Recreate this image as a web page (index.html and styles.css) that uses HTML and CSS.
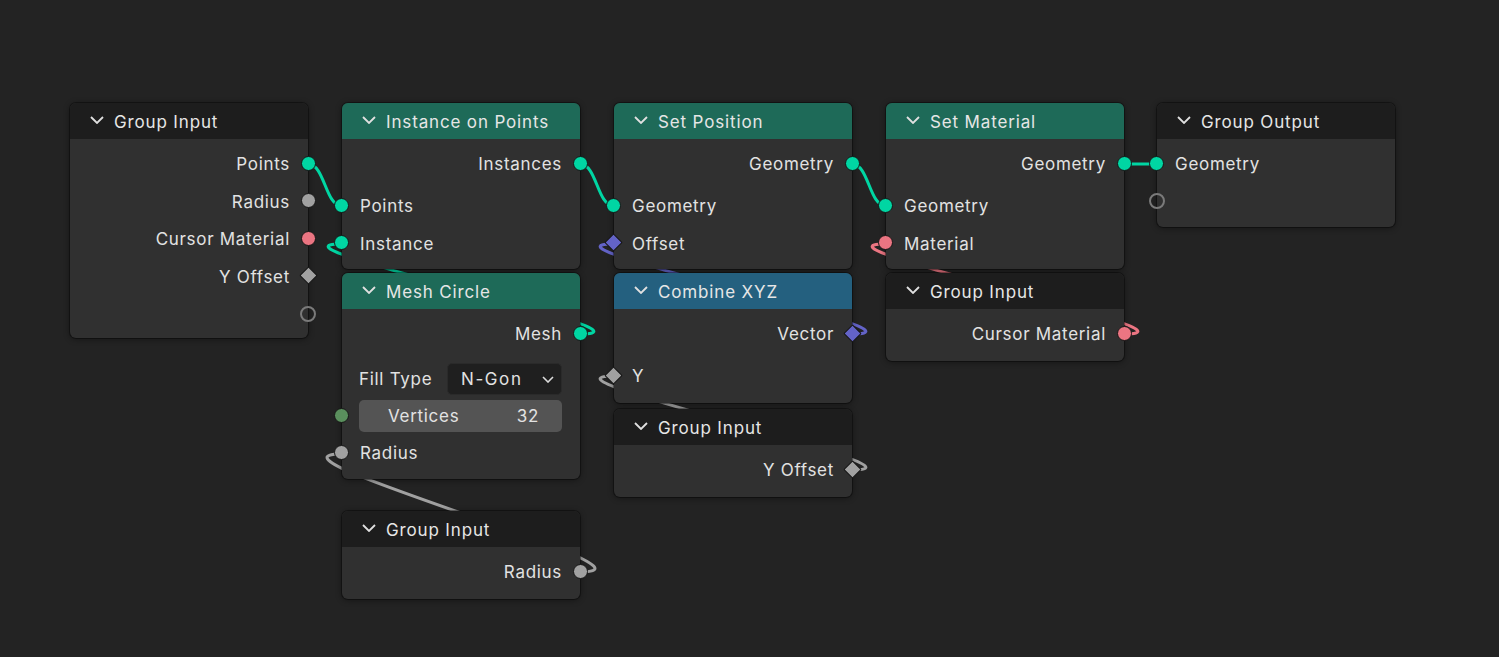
FILE: index.html
```html
<!DOCTYPE html>
<html>
<head>
<meta charset="utf-8">
<link rel="stylesheet" href="styles.css">
</head>
<body>
<div class="editor">
  <svg class="links" width="1499" height="657" viewBox="0 0 1499 657">
    <path class="lk geo" d="M308 164 C325 164 325 206 342 206"/>
    <path class="lk geo" d="M580 334 C675 334 247 244 342 244"/>
    <path class="lk geo" d="M580 164 C597 164 597 206 614 206"/>
    <path class="lk vec" d="M852 334 C947 334 519 244 614 244"/>
    <path class="lk flt" d="M852 470 C947 470 519 376 614 376"/>
    <path class="lk geo" d="M852 164 C869 164 869 206 886 206"/>
    <path class="lk mat" d="M1124 334 C1219 334 791 244 886 244"/>
    <path class="lk geo" d="M1124 164 L1157 164"/>
    <path class="lk flt" d="M580 572 C680 572 242 454 342 454"/>
  </svg>

  <div class="node pos-gi-main">
    <div class="hdr hdr-dark"><svg class="chev" viewBox="0 0 14 8"><polyline points="1,1 7,7 13,1"/></svg><span>Group Input</span></div>
    <div class="body body-tight">
      <div class="row out"><span>Points</span><i class="sock geo"></i></div>
      <div class="row out"><span>Radius</span><i class="sock flt"></i></div>
      <div class="row out"><span>Cursor Material</span><i class="sock mat"></i></div>
      <div class="row out"><span>Y Offset</span><i class="sock dia flt"></i></div>
      <div class="row out"><i class="sock empty"></i></div>
    </div>
  </div>

  <div class="node pos-iop">
    <div class="hdr hdr-green"><svg class="chev" viewBox="0 0 14 8"><polyline points="1,1 7,7 13,1"/></svg><span>Instance on Points</span></div>
    <div class="body">
      <div class="row out"><span>Instances</span><i class="sock geo"></i></div>
      <div class="inputs">
        <div class="row in"><i class="sock geo"></i><span>Points</span></div>
        <div class="row in"><i class="sock geo"></i><span>Instance</span></div>
      </div>
    </div>
  </div>

  <div class="node pos-setpos">
    <div class="hdr hdr-green"><svg class="chev" viewBox="0 0 14 8"><polyline points="1,1 7,7 13,1"/></svg><span>Set Position</span></div>
    <div class="body">
      <div class="row out"><span>Geometry</span><i class="sock geo"></i></div>
      <div class="inputs">
        <div class="row in"><i class="sock geo"></i><span>Geometry</span></div>
        <div class="row in"><i class="sock dia vec"></i><span>Offset</span></div>
      </div>
    </div>
  </div>

  <div class="node pos-setmat">
    <div class="hdr hdr-green"><svg class="chev" viewBox="0 0 14 8"><polyline points="1,1 7,7 13,1"/></svg><span>Set Material</span></div>
    <div class="body">
      <div class="row out"><span>Geometry</span><i class="sock geo"></i></div>
      <div class="inputs">
        <div class="row in"><i class="sock geo"></i><span>Geometry</span></div>
        <div class="row in"><i class="sock mat"></i><span>Material</span></div>
      </div>
    </div>
  </div>

  <div class="node pos-gout">
    <div class="hdr hdr-dark"><svg class="chev" viewBox="0 0 14 8"><polyline points="1,1 7,7 13,1"/></svg><span>Group Output</span></div>
    <div class="body">
      <div class="row in"><i class="sock geo"></i><span>Geometry</span></div>
      <div class="row in"><i class="sock empty"></i></div>
    </div>
  </div>

  <div class="node pos-mesh">
    <div class="hdr hdr-green"><svg class="chev" viewBox="0 0 14 8"><polyline points="1,1 7,7 13,1"/></svg><span>Mesh Circle</span></div>
    <div class="body">
      <div class="row out"><span>Mesh</span><i class="sock geo"></i></div>
      <div class="prop-row">
        <span class="prop-label">Fill Type</span>
        <div class="dropdown"><span class="dd-text">N-Gon</span><svg class="dd-chev" viewBox="0 0 12 7"><polyline points="1,1 6,6 11,1"/></svg></div>
      </div>
      <div class="field-row">
        <i class="sock int"></i>
        <div class="numfield"><span>Vertices</span><span>32</span></div>
      </div>
      <div class="row in row-after-field"><i class="sock flt"></i><span>Radius</span></div>
    </div>
  </div>

  <div class="node pos-comb">
    <div class="hdr hdr-blue"><svg class="chev" viewBox="0 0 14 8"><polyline points="1,1 7,7 13,1"/></svg><span>Combine XYZ</span></div>
    <div class="body body-loose">
      <div class="row out"><span>Vector</span><i class="sock dia vec"></i></div>
      <div class="inputs">
        <div class="row in"><i class="sock dia flt"></i><span>Y</span></div>
      </div>
    </div>
  </div>

  <div class="node pos-gi-mat">
    <div class="hdr hdr-dark"><svg class="chev" viewBox="0 0 14 8"><polyline points="1,1 7,7 13,1"/></svg><span>Group Input</span></div>
    <div class="body body-loose">
      <div class="row out"><span>Cursor Material</span><i class="sock mat"></i></div>
    </div>
  </div>

  <div class="node pos-gi-y">
    <div class="hdr hdr-dark"><svg class="chev" viewBox="0 0 14 8"><polyline points="1,1 7,7 13,1"/></svg><span>Group Input</span></div>
    <div class="body body-loose">
      <div class="row out"><span>Y Offset</span><i class="sock dia flt"></i></div>
    </div>
  </div>

  <div class="node pos-gi-rad">
    <div class="hdr hdr-dark"><svg class="chev" viewBox="0 0 14 8"><polyline points="1,1 7,7 13,1"/></svg><span>Group Input</span></div>
    <div class="body body-loose">
      <div class="row out"><span>Radius</span><i class="sock flt"></i></div>
    </div>
  </div>
</div>
</body>
</html>
```

FILE: styles.css
```css
html, body {
  margin: 0;
  padding: 0;
  background: #232323;
}

.editor {
  position: relative;
  width: 1499px;
  height: 657px;
  overflow: hidden;
  background: #232323;
  font-family: Inter, "Noto Sans", "DejaVu Sans", sans-serif;
  font-size: 17px;
  letter-spacing: 0.7px;
  color: #e2e2e2;
}

.links {
  position: absolute;
  left: 0;
  top: 0;
  z-index: 0;
}

.lk {
  fill: none;
  stroke-width: 3;
  stroke-linecap: round;
}
.lk.geo { stroke: #00d6a3; }
.lk.vec { stroke: #6363c7; }
.lk.flt { stroke: #a1a1a1; }
.lk.mat { stroke: #eb7582; }

/* nodes: positioned on the free canvas */
.node {
  position: absolute;
  z-index: 1;
  width: 238px;
  background: #303030;
  border-radius: 6px;
  box-shadow: 0 0 0 1px rgba(0, 0, 0, 0.35), 0 1px 6px rgba(0, 0, 0, 0.45);
  display: flex;
  flex-direction: column;
}

.pos-gi-main { left: 70px;   top: 103px; }
.pos-iop     { left: 342px;  top: 103px; }
.pos-setpos  { left: 614px;  top: 103px; }
.pos-setmat  { left: 886px;  top: 103px; }
.pos-gout    { left: 1157px; top: 103px; }
.pos-mesh    { left: 342px;  top: 273px; }
.pos-comb    { left: 614px;  top: 273px; }
.pos-gi-mat  { left: 886px;  top: 273px; }
.pos-gi-y    { left: 614px;  top: 409px; }
.pos-gi-rad  { left: 342px;  top: 511px; }

.hdr {
  height: 36px;
  display: flex;
  align-items: center;
  padding-left: 20px;
  gap: 10px;
  border-radius: 6px 6px 0 0;
  color: #e6e6e6;
  letter-spacing: 0.85px;
}
.hdr span { line-height: 1; margin-top: 2px; }
.hdr-dark  { background: #1d1d1d; }
.hdr-green { background: #1e6a58; }
.hdr-blue  { background: #24607f; }

.chev {
  width: 14px;
  height: 8px;
  margin-top: -2px;
  flex: none;
}
.chev polyline {
  fill: none;
  stroke: #e0e0e0;
  stroke-width: 1.8;
}

.body {
  padding: 6px 0 7px;
  display: flex;
  flex-direction: column;
}
.body-tight { padding-bottom: 5px; }
.body-loose { padding-bottom: 8px; }

.inputs {
  margin-top: 4.5px;
  display: flex;
  flex-direction: column;
}

.row {
  position: relative;
  height: 37.5px;
  display: flex;
  align-items: center;
  padding: 0 18px;
  white-space: nowrap;
}
.row span { margin-top: 1px; }
.row.out { justify-content: flex-end; }
.row.in  { justify-content: flex-start; }

/* sockets sit over the node edge */
.sock {
  position: absolute;
  top: 50%;
  width: 13px;
  height: 13px;
  margin-top: -8px;
  border-radius: 50%;
  border: 1.5px solid #161616;
  box-sizing: content-box;
}
.row.out .sock { right: -8px; }
.row.in .sock  { left: -8px; }

.sock.geo { background: #00d6a3; }
.sock.flt { background: #a1a1a1; }
.sock.mat { background: #eb7582; }
.sock.vec { background: #6363c7; }
.sock.int { background: #5a8f5d; }
.sock.empty {
  background: transparent;
  border: 2px solid #7a7a7a;
  width: 12px;
  height: 12px;
}

.sock.dia {
  border-radius: 1px;
  width: 11px;
  height: 11px;
  margin-top: -7px;
  transform: rotate(45deg);
}
.row.out .sock.dia { right: -7px; }
.row.in .sock.dia { left: -7px; }

/* Mesh Circle properties */
.prop-row {
  margin-top: 10.5px;
  height: 32px;
  display: flex;
  align-items: center;
  padding: 0 18px 0 17px;
}
.prop-label {
  width: 88px;
  flex: none;
}
.dropdown {
  flex: 1;
  height: 32px;
  box-sizing: border-box;
  background: #1f1f1f;
  border: 1px solid #2a2a2a;
  border-radius: 5px;
  display: flex;
  align-items: center;
  justify-content: space-between;
  padding: 0 7px 0 13px;
}
.dd-text { letter-spacing: 1.6px; }
.dd-chev {
  width: 12px;
  height: 7px;
}
.dd-chev polyline {
  fill: none;
  stroke: #dcdcdc;
  stroke-width: 1.6;
}

.field-row {
  position: relative;
  margin-top: 5px;
  height: 32px;
  padding: 0 18px 0 17px;
  display: flex;
}
.field-row .sock {
  left: -8px;
}
.numfield {
  flex: 1;
  background: #545454;
  border-radius: 5px;
  display: flex;
  align-items: center;
  justify-content: space-between;
  padding: 0 23px 0 29px;
}

.row-after-field { margin-top: 2px; }
```
